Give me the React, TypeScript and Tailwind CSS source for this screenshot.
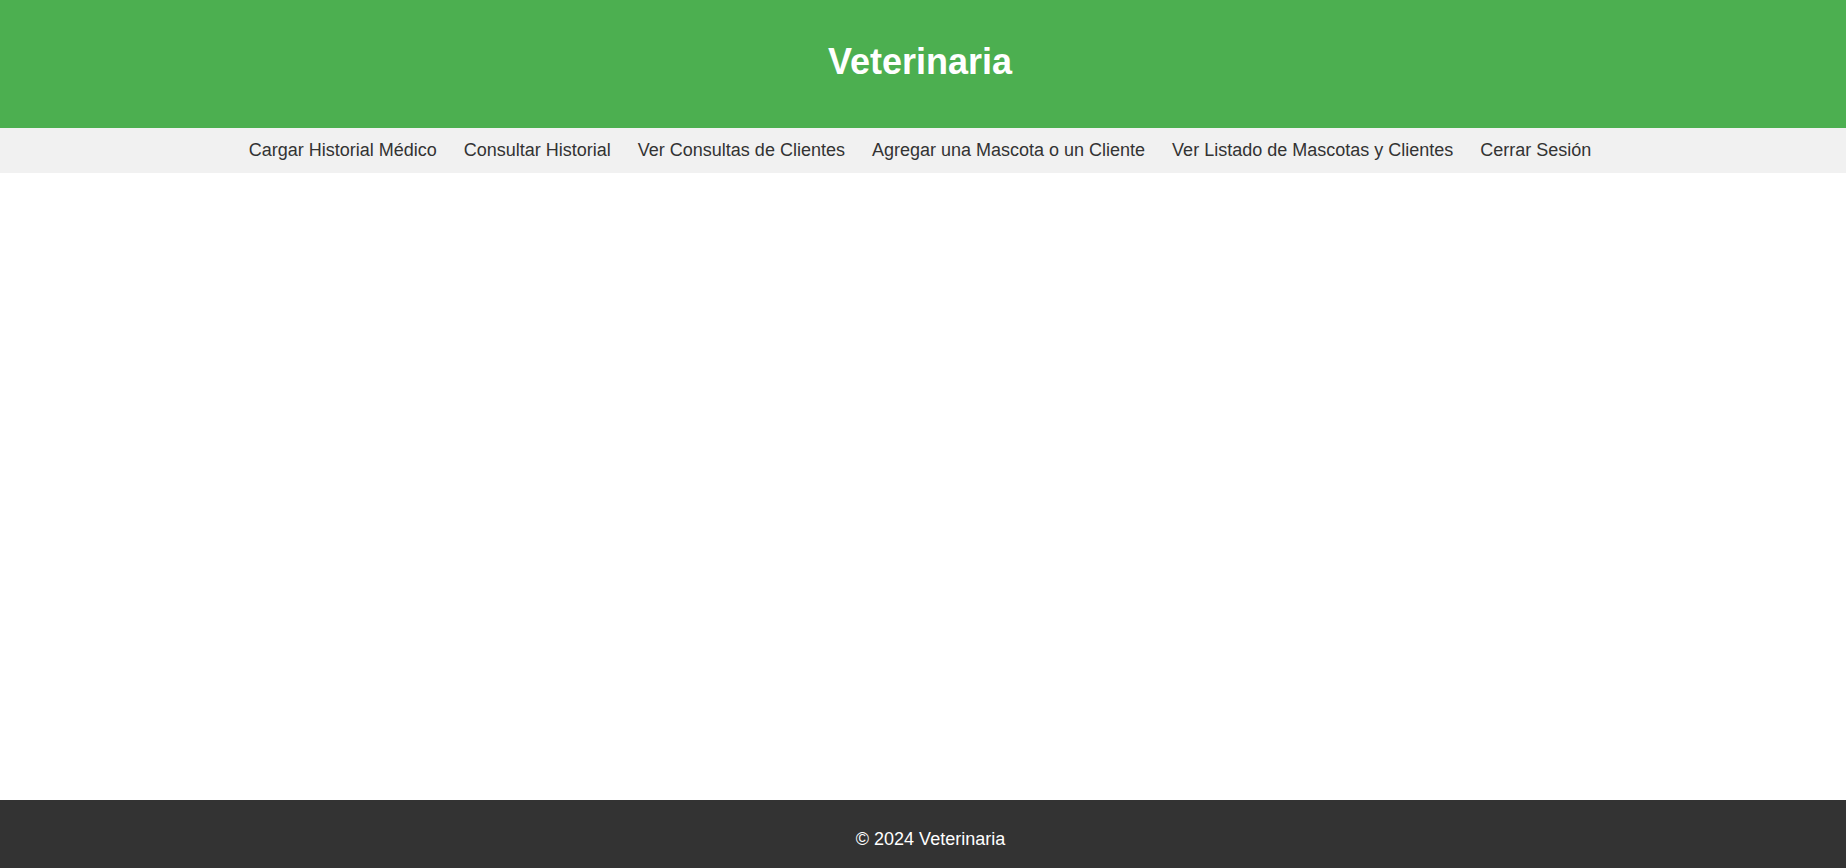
export default function App() {
  const links = [
    "Cargar Historial Médico",
    "Consultar Historial",
    "Ver Consultas de Clientes",
    "Agregar una Mascota o un Cliente",
    "Ver Listado de Mascotas y Clientes",
    "Cerrar Sesión",
  ];

  return (
    <div className="flex flex-col h-screen bg-white font-['Liberation_Sans',Arial,sans-serif]">
      {/* Header */}
      <header className="h-[128px] flex-shrink-0 bg-[#4caf50] flex items-center justify-center pb-[4px] pr-[6px]">
        <h1 className="text-[36px] font-bold text-white leading-[1.15]">Veterinaria</h1>
      </header>

      {/* Nav */}
      <nav className="h-[45px] flex-shrink-0 bg-[#f1f1f1] flex items-center justify-center gap-[27px] pr-[6px]">
        {links.map((link, idx) => (
          <a key={idx} href="#" className="text-[18px] text-[#333] leading-[1.15]">
            {link}
          </a>
        ))}
      </nav>

      <main className="flex-1"></main>

      {/* Footer */}
      <footer className="h-[68px] flex-shrink-0 bg-[#333] flex items-center justify-center pt-[10px] pl-[15px]">
        <p className="text-[18px] text-white leading-[1.15]">© 2024 Veterinaria</p>
      </footer>
    </div>
  );
}
